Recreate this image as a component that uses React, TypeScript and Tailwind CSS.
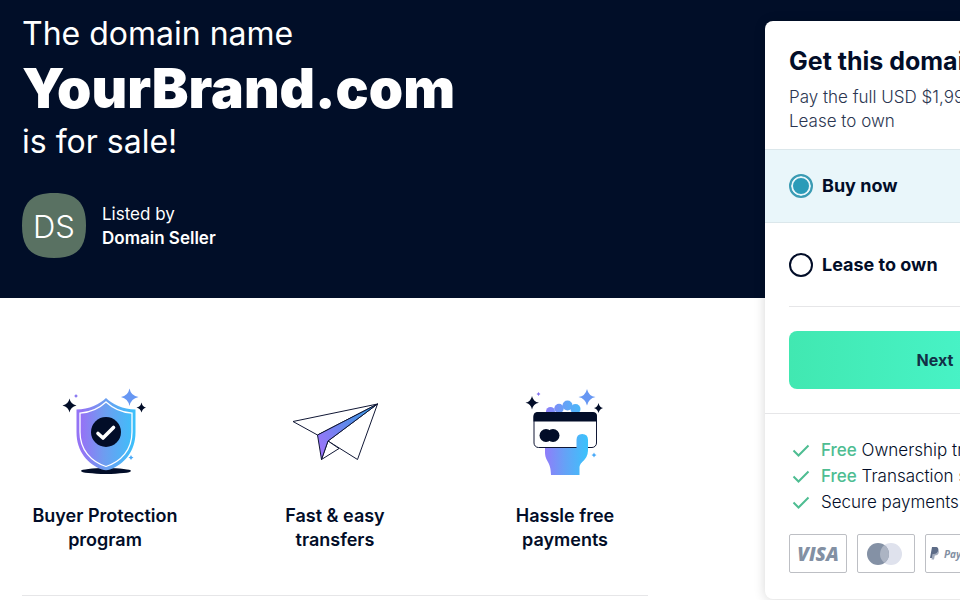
import React from "react";

function Check() {
  return (
    <svg className="mt-1 h-4 w-5 shrink-0" viewBox="0 0 20 16" fill="none" stroke="#4ebd92" strokeWidth="2" aria-hidden="true">
      <path d="M2.500 8.500 7.500 13.500 17.500 3.500" />
    </svg>
  );
}

function ShieldArt() {
  return (
    <svg className="h-24 w-28" viewBox="0 0 112 96" aria-hidden="true">
      <defs>
        <linearGradient id="shield" x1="27" y1="0" x2="88" y2="0" gradientUnits="userSpaceOnUse">
          <stop offset="0.1" stopColor="#9474f5" />
          <stop offset="0.45" stopColor="#6f9cf0" />
          <stop offset="1" stopColor="#38c3fb" />
        </linearGradient>
      </defs>
      <ellipse cx="57" cy="87" rx="25" ry="3" fill="#020d28" />
      <path d="M57 14C51 20 40 25.500 27.500 25.500V48C27.500 68 39 80 53 85.500Q57 87 61 85.500C75 80 86.500 68 86.500 48V25.500C74 25.500 63 20 57 14Z" fill="url(#shield)" />
      <path d="M57 18C50 24.500 41 28.500 31 29.200V48C31 66 42 77.500 57 82.500C72 77.500 83 66 83 48V29.200C73 28.500 64 24.500 57 18Z" fill="none" stroke="#fff" strokeWidth="1.300" />
      <circle cx="57" cy="48" r="15" fill="#020d28" />
      <path d="M49 49.500 54 54 64.500 43.500" fill="none" stroke="#fff" strokeWidth="3.600" strokeLinecap="round" strokeLinejoin="round" />
      <path d="M20.500 14.500Q21.500 20 27.500 21.500Q21.500 23 20.500 28.500Q19.500 23 13.500 21.500Q19.500 20 20.500 14.500Z" fill="#020d28" />
      <path d="M80.500 4.500Q82 12 89.500 13Q82 14.500 80.500 22Q79 14.500 72 13Q79 12 80.500 4.500Z" fill="#6797f3" />
      <path d="M92.500 18.500Q93.500 23 97 23.500Q93.500 24.500 92.500 28.500Q91.500 24.500 87.500 23.500Q91.500 23 92.500 18.500Z" fill="#020d28" />
      <path d="M27 10Q27.500 11.700 29 12Q27.500 12.500 27 14Q26.500 12.500 25 12Q26.500 11.700 27 10Z" fill="#806ff0" />
      <path d="M82 71Q82.500 73 84.500 73.500Q82.500 74 82 76Q81.500 74 79.500 73.500Q81.500 73 82 71Z" fill="#48a9f8" />
    </svg>
  );
}

function PlaneArt() {
  return (
    <svg className="h-24 w-28" viewBox="0 0 112 96" aria-hidden="true">
      <defs>
        <linearGradient id="plane" x1="38" y1="60" x2="98" y2="22" gradientUnits="userSpaceOnUse">
          <stop offset="0" stopColor="#9a75fa" />
          <stop offset="0.6" stopColor="#558ce8" />
          <stop offset="1" stopColor="#369de2" />
        </linearGradient>
      </defs>
      <g stroke="#101735" strokeWidth="1" strokeLinejoin="round">
        <path d="M98.500 20 14 37.500 38.500 51Z" fill="#fff" />
        <path d="M98.500 20 78.500 75.500 49 57Z" fill="#fff" />
        <path d="M42.500 75.500 60 64.500 49 57Z" fill="#fff" />
        <path d="M98.500 20 38.500 51 42.500 75.500 49 57Z" fill="url(#plane)" />
      </g>
    </svg>
  );
}

function CardArt() {
  return (
    <svg className="h-24 w-28" viewBox="0 0 112 96" aria-hidden="true">
      <defs>
        <linearGradient id="hand" x1="32" y1="0" x2="80" y2="0" gradientUnits="userSpaceOnUse">
          <stop offset="0" stopColor="#9875fa" />
          <stop offset="0.500" stopColor="#65a2f6" />
          <stop offset="1" stopColor="#39c4fc" />
        </linearGradient>
      </defs>
      <g fill="url(#hand)">
        <circle cx="41.500" cy="27.500" r="4.500" />
        <circle cx="50" cy="24.500" r="4.700" />
        <circle cx="58.500" cy="21.500" r="5" />
        <circle cx="66.500" cy="25" r="5" />
        <path d="M36 60V68C36 78 42 77 42 91H70.500V84C70.500 78 79 75 79 62V48H40Z" />
      </g>
      <rect x="25" y="28.500" width="62.500" height="35" rx="4.500" fill="#fff" stroke="#101735" strokeWidth="1" />
      <path d="M24.500 37.500V32Q24.500 28 29 28H83.500Q88 28 88 32V37.500Z" fill="#020d28" />
      <circle cx="37" cy="51.500" r="6.500" fill="#020d28" />
      <circle cx="44" cy="51.500" r="6.500" fill="#020d28" />
      <path d="M67.500 70V56Q67.500 50 73.200 50Q79 50 79 56V66Q79 74 72 79Z" fill="url(#hand)" />
      <path d="M23 12Q24 17.500 30 18.800Q24 20 23 25.500Q22 20 16.500 18.800Q22 17.500 23 12Z" fill="#020d28" />
      <path d="M78 5Q79.500 12 86.500 13Q79.500 14.500 78 21.500Q76.500 14.500 69.500 13Q76.500 12 78 5Z" fill="#6797f3" />
      <path d="M89.500 19Q90.500 23.300 94 24Q90.500 25 89.500 29Q88.500 25 85 24Q88.500 23.300 89.500 19Z" fill="#020d28" />
      <path d="M29.500 8Q30 9.700 31.500 10Q30 10.500 29.500 12Q29 10.500 27.500 10Q29 9.700 29.500 8Z" fill="#806ff0" />
      <path d="M85 68.500Q85.500 70.500 87.500 71Q85.500 71.500 85 73.500Q84.500 71.500 82.500 71Q84.500 70.500 85 68.500Z" fill="#48a9f8" />
    </svg>
  );
}

const features = [
  { art: <ShieldArt />, lines: ["Buyer Protection", "program"] },
  { art: <PlaneArt />, lines: ["Fast & easy", "transfers"] },
  { art: <CardArt />, lines: ["Hassle free", "payments"] },
];

function Hero() {
  return (
    <header className="col-span-full row-start-1 bg-[#010e28] px-[22px] pt-[14px] pb-10 text-white">
      <h1>
        <span className="block text-[32px] leading-10">The domain name</span>
        <span className="block text-[55px] leading-[68px] font-black">YourBrand.com</span>
        <span className="block text-[32px] leading-10">is for sale!</span>
      </h1>
      <div className="mt-[31px] flex items-center gap-4">
        <div className="grid h-[65px] w-16 place-items-center">
          <svg className="h-full w-full [grid-area:1/1]" viewBox="0 0 64 65" aria-hidden="true">
            <path d="M32 0C54 0 64 9 64 32.500S54 65 32 65S0 56 0 32.500S10 0 32 0Z" fill="#597162" />
          </svg>
          <span className="pt-0.5 text-[31px] leading-10 font-light [grid-area:1/1]">DS</span>
        </div>
        <p className="text-[17px] leading-6">
          Listed by
          <br />
          <strong className="font-semibold">Domain Seller</strong>
        </p>
      </div>
    </header>
  );
}

function Features() {
  return (
    <main className="col-start-1 row-start-2 mr-[117px] ml-[22px]">
      <ul className="flex justify-between border-b border-[#e6e6e8] pt-[86px] pb-[43px]">
        {features.map((f) => (
          <li key={f.lines[0]} className="flex w-[166px] flex-col items-center">
            {f.art}
            <h2 className="mt-6 text-center text-[18px] leading-6 font-semibold">
              {f.lines[0]}
              <br />
              {f.lines[1]}
            </h2>
          </li>
        ))}
      </ul>
    </main>
  );
}

const radio =
  "h-6 w-6 shrink-0 appearance-none rounded-full border-2 border-[#020d28] checked:border-[#3b9bb3] checked:bg-[#2b9bb8] checked:shadow-[inset_0_0_0_2px_#e9f6fa]";

function BuyCard() {
  return (
    <aside className="col-start-2 row-span-2 row-start-1 mt-[21px] self-start overflow-hidden rounded-lg bg-white shadow-[0_1px_12px_rgba(0,0,0,0.16)]">
      <form onSubmit={(e) => e.preventDefault()}>
        <div className="px-6 pt-6">
          <h2 className="text-[25px] leading-8 font-bold whitespace-nowrap">Get this domain</h2>
          <p className="mt-2 pb-4 text-[17px] leading-6 font-light text-[#2b3651]">
            Pay the full USD $1,999 now, or
            <br />
            Lease to own
          </p>
        </div>
        <label className="flex h-[74px] items-center gap-[9px] border-y border-[#dbe7eb] bg-[#e9f6fa] px-6">
          <input type="radio" name="plan" defaultChecked className={radio} />
          <span className="text-[18px] leading-6 font-bold">Buy now</span>
        </label>
        <label className="mx-6 flex h-[84px] items-center gap-[9px] border-b border-[#e6e6e8]">
          <input type="radio" name="plan" className={radio} />
          <span className="text-[18px] leading-6 font-bold">Lease to own</span>
        </label>
        <div className="border-b border-[#e6e6e8] p-6">
          <button type="submit" className="h-[58px] w-full rounded-lg bg-linear-to-r from-[#41e8b1] to-[#4cfad4] text-base font-bold text-[#123047]">
            Next
          </button>
        </div>
      </form>
      <ul className="px-[26px] pt-6 text-[17px] font-light whitespace-nowrap">
        <li className="flex h-[26px] gap-[10px] leading-6"><Check /><span><b className="font-medium text-[#4ebd92]">Free</b> Ownership transfer</span></li>
        <li className="flex h-[26px] gap-[10px] leading-6"><Check /><span><b className="font-medium text-[#4ebd92]">Free</b> Transaction support</span></li>
        <li className="flex h-[26px] gap-[10px] leading-6"><Check /><span>Secure payments</span></li>
      </ul>
      <div className="flex gap-[10px] px-6 pt-[18px] pb-[26px]">
        <div className="flex h-[39px] w-[58px] items-center justify-center rounded-xs border border-[#bdbfc4]">
          <span className="font-['Open_Sans',sans-serif] text-[19px] leading-5 font-extrabold text-[#8390a3] italic">VISA</span>
        </div>
        <div className="flex h-[39px] w-[58px] items-center justify-center rounded-xs border border-[#bdbfc4]">
          <svg className="h-6 w-10" viewBox="0 0 40 24" aria-hidden="true">
            <circle cx="25" cy="12" r="11" fill="#dfe2ed" />
            <circle cx="12" cy="12" r="11" fill="#8491a5" />
            <path d="M18.500 3.100A11 11 0 0 1 18.500 20.900A11 11 0 0 1 18.500 3.100Z" fill="#acb4c3" />
          </svg>
        </div>
        <div className="flex h-[39px] w-[58px] items-center gap-[5px] rounded-xs border border-[#bdbfc4] pl-1">
          <svg className="h-[13px] w-[9px] shrink-0" viewBox="0 0 9 13" aria-hidden="true">
            <path d="M2 0H6.500Q9 .8 8.200 4Q7.500 7.500 3.500 7.500L2.800 11H0Z" fill="#5d6c87" />
            <path d="M8.500 2.500Q10 8 4.800 8.500L4 12.500H1.500L2.500 7Q7.500 7.500 8.500 2.500Z" fill="#a2abbc" />
          </svg>
          <span className="font-['Open_Sans',sans-serif] text-[10px] leading-4 font-bold text-[#8390a3] italic">PayPal</span>
        </div>
      </div>
    </aside>
  );
}

export default function App() {
  return (
    <div className="min-h-screen overflow-x-hidden bg-white font-['Inter',sans-serif] text-[#020d28]">
      <div className="grid min-w-[1127px] grid-cols-[1fr_340px_22px] grid-rows-[auto_1fr]">
        <Hero />
        <Features />
        <BuyCard />
      </div>
    </div>
  );
}
